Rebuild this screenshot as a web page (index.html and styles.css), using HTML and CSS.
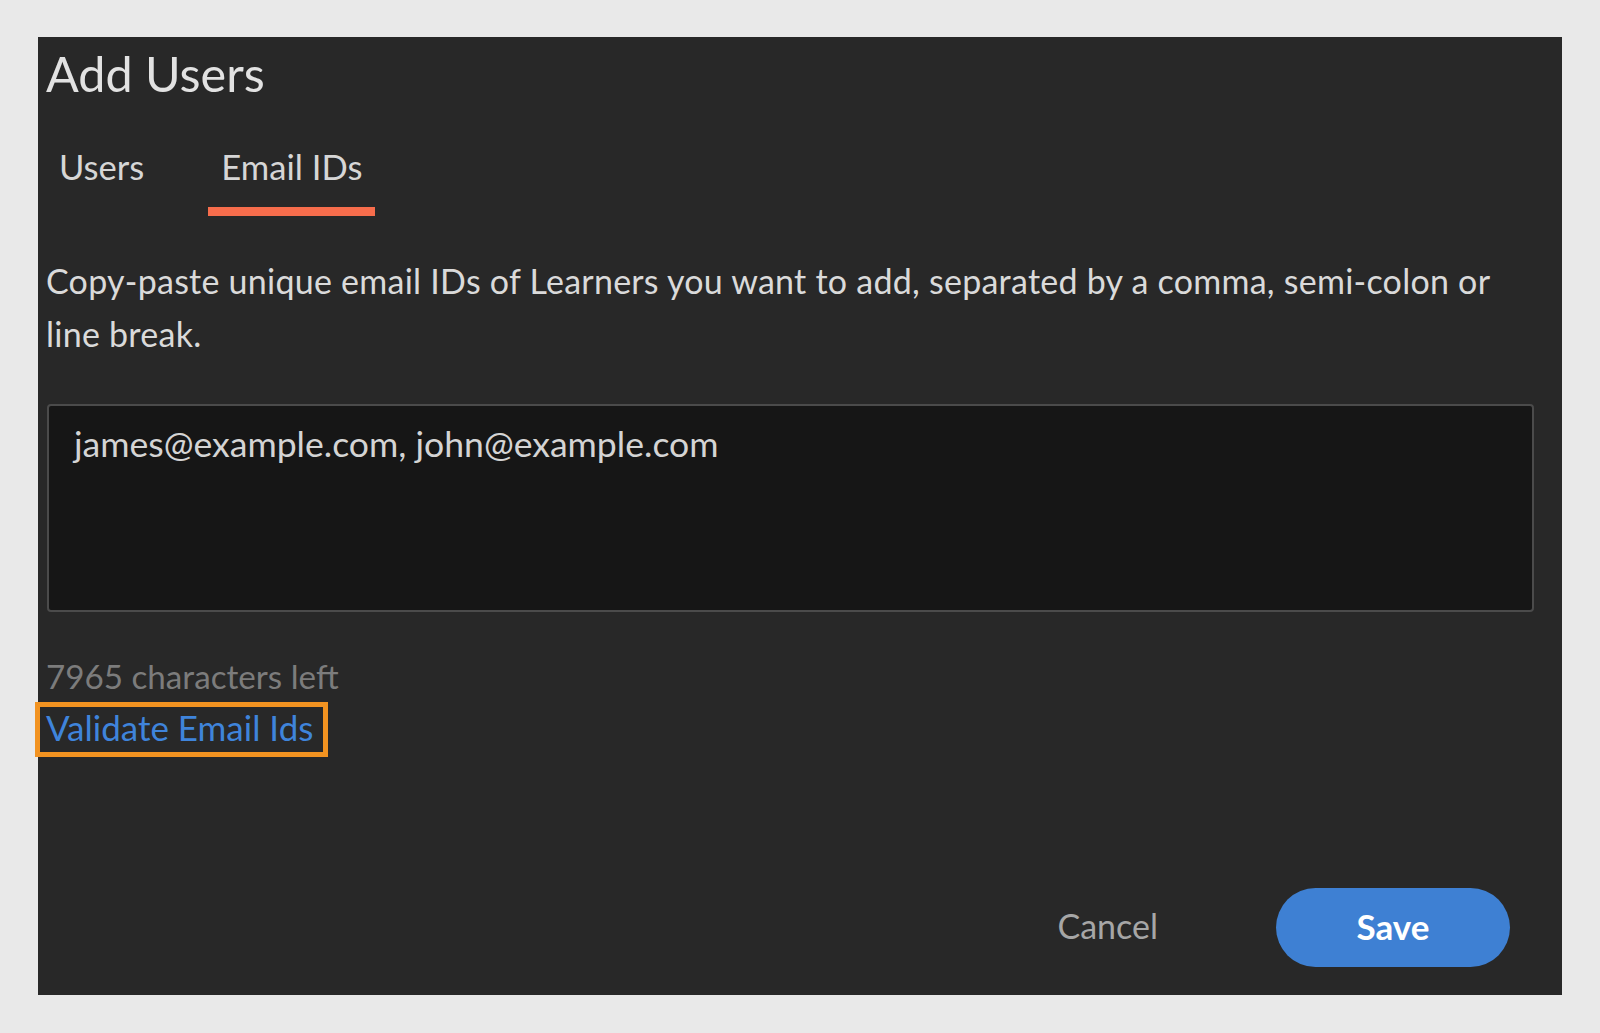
FILE: index.html
```html
<!DOCTYPE html>
<html lang="en">
<head>
<meta charset="utf-8">
<title>Add Users</title>
<link rel="stylesheet" href="styles.css">
</head>
<body>
<div class="dialog">
  <h1 class="title">Add Users</h1>
  <div class="tabs">
    <div class="tab">Users</div>
    <div class="tab tab-active">Email IDs</div>
  </div>
  <p class="desc">Copy-paste unique email IDs of Learners you want to add, separated by a comma, semi-colon or line break.</p>
  <div class="field">james@example.com, john@example.com</div>
  <div class="count">7965 characters left</div>
  <div class="validate-row"><a class="validate">Validate Email Ids</a></div>
  <div class="footer">
    <button class="btn-cancel">Cancel</button>
    <button class="btn-save">Save</button>
  </div>
</div>
</body>
</html>
```

FILE: styles.css
```css
html, body {
  margin: 0;
  padding: 0;
  background: #e9e9e9;
}
body {
  font-family: Lato, "Open Sans", sans-serif;
  padding: 37px 0 0 38px;
}
.dialog {
  box-sizing: border-box;
  width: 1524px;
  height: 958px;
  background: #282828;
  padding: 6px 28px 28px 8px;
  display: flex;
  flex-direction: column;
}
.title {
  margin: 0;
  font-size: 48.5px;
  line-height: 60px;
  font-weight: 400;
  color: #e2e2e2;
}
.tabs {
  display: flex;
  gap: 51px;
  margin-top: 41px;
}
.tab {
  font-size: 34.6px;
  line-height: 46px;
  color: #d6d6d6;
  padding: 0 13px 17px;
  border-bottom: 9px solid transparent;
}
.tab-active {
  border-bottom-color: #f76d4c;
}
.desc {
  margin: 38px 0 0;
  font-size: 34px;
  letter-spacing: 0.25px;
  line-height: 53px;
  color: #dadada;
}
.field {
  margin-top: 44px;
  box-sizing: border-box;
  height: 208px;
  margin-left: 1px;
  background: #161616;
  border: 2px solid #4b4b4b;
  border-radius: 4px;
  padding: 16px 25px;
  font-size: 35.6px;
  line-height: 43px;
  color: #d4d4d4;
}
.count {
  margin-top: 44px;
  font-size: 33.2px;
  line-height: 40px;
  color: #7c7c7c;
}
.validate-row {
  margin-top: 11px;
}
.validate {
  display: inline-block;
  font-size: 35px;
  line-height: 40px;
  padding: 0 10px 5px 6px;
  margin-left: -6px;
  color: #3f84db;
  outline: 5px solid #f29321;
  cursor: pointer;
}
.footer {
  margin-top: auto;
  display: flex;
  justify-content: flex-end;
  align-items: center;
}
.btn-cancel {
  background: none;
  border: none;
  padding: 0 0 4px;
  margin-right: 118px;
  font-family: inherit;
  font-size: 34px;
  color: #a6a6a6;
}
.btn-save {
  box-sizing: border-box;
  width: 234px;
  height: 79px;
  margin-right: 24px;
  padding: 0 0 4px;
  border: none;
  border-radius: 40px;
  background: #3e80d3;
  color: #ffffff;
  font-family: inherit;
  font-size: 35px;
  font-weight: 700;
}
```
